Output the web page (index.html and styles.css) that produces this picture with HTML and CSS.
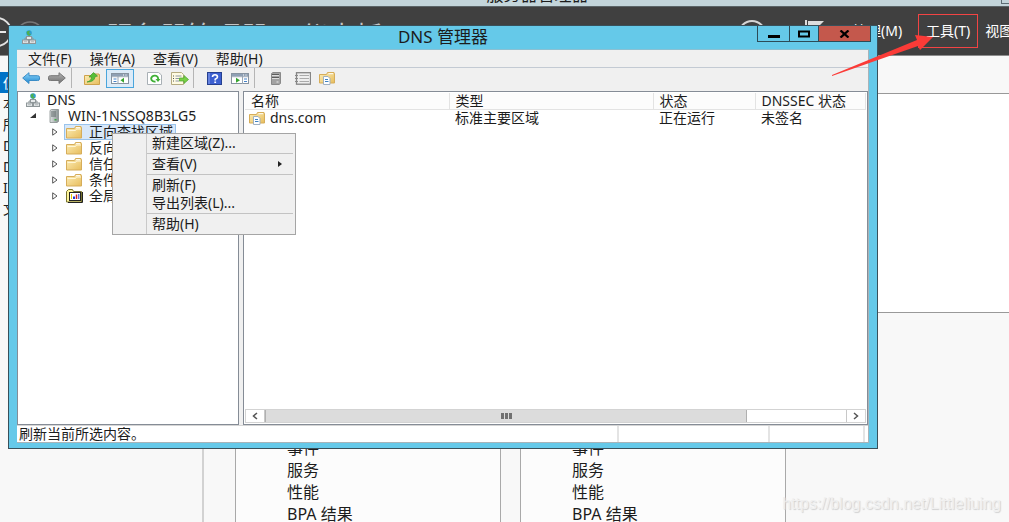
FILE: index.html
```html
<!DOCTYPE html>
<html lang="zh-CN">
<head>
<meta charset="utf-8">
<title>DNS 管理器</title>
<link rel="stylesheet" href="styles.css">
</head>
<body>
<svg class="defs" width="0" height="0" aria-hidden="true">
  <defs>
    <linearGradient id="gold" x1="0" y1="0" x2="1" y2="1"><stop offset="0" stop-color="#fdeeb8"/><stop offset="1" stop-color="#e7bd5c"/></linearGradient>
    <linearGradient id="steel" x1="0" y1="0" x2="1" y2="0"><stop offset="0" stop-color="#dfe3e3"/><stop offset="1" stop-color="#8b9494"/></linearGradient>
    <linearGradient id="sky" x1="0" y1="0" x2="0" y2="1"><stop offset="0" stop-color="#8fd8fb"/><stop offset="1" stop-color="#1f86cf"/></linearGradient>
    <linearGradient id="ash" x1="0" y1="0" x2="0" y2="1"><stop offset="0" stop-color="#b5b5b5"/><stop offset="1" stop-color="#6f6f6f"/></linearGradient>
    <symbol id="i-dns" viewBox="0 0 14 14">
      <path d="M7 5v4M3 10V8h8v2" stroke="#8d9699" fill="none"/>
      <circle cx="7" cy="3" r="2.8" fill="#2f9fd0"/><path d="M4.6 2Q6 .4 8 .8L7 3.200l2 1-1.500 1.600L5.500 5z" fill="#4fb04d"/>
      <rect x="4.500" y="6.500" width="5" height="3" fill="#e6e9ea" stroke="#8f9799"/>
      <rect x=".5" y="10" width="6" height="3.500" fill="#dfe3e4" stroke="#8f9799"/><rect x="7.500" y="10" width="6" height="3.500" fill="#dfe3e4" stroke="#8f9799"/>
      <path d="M2 11.700h3M9 11.700h3" stroke="#b4babc"/>
    </symbol>
    <symbol id="i-server" viewBox="0 0 12 14">
      <path d="M2 1.500L3.500.5h7v12l-1.500 1H2z" fill="url(#steel)" stroke="#858d8d" stroke-width=".8"/>
      <path d="M3 3h5M3 5h5M3 7h5" stroke="#5f6868"/><rect x="6.500" y="10" width="2" height="1.500" fill="#3fae49"/>
    </symbol>
    <symbol id="i-folder" viewBox="0 0 16 13">
      <path d="M.5 2.500h8l1-2h5.500l.5 1v10.500H.5z" fill="url(#gold)" stroke="#d6ad5a"/>
      <path d="M1.500 4.500h8l1-1.500H15" stroke="#fff6d6" fill="none"/><path d="M10 1.700h4" stroke="#fff"/>
    </symbol>
    <symbol id="i-zone" viewBox="0 0 16 13">
      <path d="M.5 2.500h7l1-2h6.500l.5 1v9.500H.5z" fill="url(#gold)" stroke="#d6ad5a"/><path d="M9.500 1.700h4.500" stroke="#fff"/>
      <path d="M4.500 4.500h4.500l2 2v6H4.500z" fill="#fff" stroke="#9fb0c2"/><path d="M6 7.500h3M6 9.500h3.500" stroke="#3d82c4"/>
    </symbol>
    <symbol id="i-log" viewBox="0 0 18 14">
      <path d="M.5 2.500L2.500.5h4l1 2h8v10.500H.5z" fill="#fdf49b" stroke="#77732f"/><path d="M16.500 3v10.500H2" stroke="#222" fill="none"/>
      <rect x="3.500" y="3.500" width="11" height="8" fill="#fff" stroke="#222"/>
      <path d="M5.500 5v5" stroke="#e3c700"/><path d="M8 10V7.500" stroke="#1f3bd1" stroke-width="2"/><path d="M10.500 10V5.500" stroke="#d51d1d" stroke-width="1.500"/><path d="M12.800 10V5" stroke="#1f3bd1"/>
    </symbol>
    <symbol id="i-back" viewBox="0 0 18 12"><path d="M.7 6L7 .7v3h8.500q2 0 2 1.500v2q0 1.300-2 1.300H7v3z" fill="url(#sky)" stroke="#3a8cc6"/></symbol>
    <symbol id="i-next" viewBox="0 0 18 12"><path d="M17.300 6L11 .7v3H2.500q-2 0-2 1.500v2q0 1.300 2 1.300H11v3z" fill="url(#ash)" stroke="#777"/></symbol>
    <symbol id="i-up" viewBox="0 0 16 13">
      <path d="M.5 3.500h7l1-1.500h6.500l.5 1v9.500H.5z" fill="url(#gold)" stroke="#cfa24c"/>
      <path d="M3 10Q7.500 9 7.500 5H5L9.500.6 13.500 4 11 4.800Q10.500 10 3 10z" fill="#57bf38" stroke="#3f9a2b" stroke-width=".7"/>
    </symbol>
    <symbol id="i-pane" viewBox="0 0 18 11">
      <rect x=".5" y=".5" width="17" height="10" fill="#fff" stroke="#8793a0"/><path d="M1 2h16" stroke="#8fa0b4" stroke-width="2"/><path d="M12 2h1M14.500 2h1" stroke="#fff"/>
      <path d="M7 3v8M1 3.700h16" stroke="#9aa7b5"/><path d="M2.500 6h3M2.500 8.500h3" stroke="#4683c9"/><path d="M13 4.800v5L9.500 7.300z" fill="#37a52e"/>
    </symbol>
    <symbol id="i-run" viewBox="0 0 18 11">
      <rect x=".5" y=".5" width="17" height="10" fill="#fff" stroke="#8793a0"/><path d="M1 2h16" stroke="#8fa0b4" stroke-width="2"/><path d="M12 2h1M14.500 2h1" stroke="#fff"/>
      <path d="M11.500 3v8M1 3.700h16" stroke="#9aa7b5"/><path d="M13 6h3M13 8.500h3" stroke="#4683c9"/><path d="M5 4.800v5l4-2.500z" fill="#37a52e"/>
    </symbol>
    <symbol id="i-refresh" viewBox="0 0 15 13">
      <path d="M.5.5h11l3 2.500v9.500H.5z" fill="#fff" stroke="#a9b0b5"/>
      <path d="M11 7.500A3.500 3 0 1 0 8.500 9.500" fill="none" stroke="#3fb035" stroke-width="1.900"/><path d="M8.500 7h5l-2.500 3z" fill="#3fb035"/>
    </symbol>
    <symbol id="i-export" viewBox="0 0 18 13">
      <path d="M.5.5h10l2 2v10H.5z" fill="#fffbe2" stroke="#b5ab80"/><path d="M2 4h1M2 6.500h1M2 9h1" stroke="#555"/><path d="M4.500 4h6M4.500 6.500h4M4.500 9h4" stroke="#8e98a8"/>
      <path d="M8.500 6h4.500V3.500l4.500 4-4.500 4V9H8.500z" fill="#78cf45" stroke="#4aa329" stroke-width=".7"/>
    </symbol>
    <symbol id="i-help" viewBox="0 0 15 13">
      <rect x=".5" y=".5" width="14" height="12" fill="#3c5fd0" stroke="#26408f"/><path d="M2 1v11" stroke="#8da5ee"/>
      <path d="M5.500 5Q5.500 2.700 8 2.700T10.500 5Q10.500 6 8.200 7.200V8.500" fill="none" stroke="#fff" stroke-width="1.600"/><rect x="7.300" y="9.500" width="1.800" height="1.500" fill="#fff"/>
    </symbol>
    <symbol id="i-tower" viewBox="0 0 10 13">
      <path d="M.5 1.500L2 .5h7.500v11l-1.500 1H.5z" fill="#a3a3a3" stroke="#8a8a8a"/><path d="M1 2.500h7M1 5.500h7" stroke="#5d5d5d"/><path d="M1 3.500h7M1 6.500h7" stroke="#ddd"/><path d="M5.500 10h2" stroke="#eee"/>
    </symbol>
    <symbol id="i-list" viewBox="0 0 16 13">
      <rect x="1.500" y=".7" width="14" height="11.500" fill="#eee" stroke="#858585" stroke-width="1.300"/><path d="M4.500 3.500H14M4.500 6.500H14M4.500 9.500H14" stroke="#aaa"/><path d="M0 3.500h3M0 6.500h3M0 9.500h3" stroke="#888"/>
    </symbol>
  </defs>
</svg>

<div class="desktop">
  <div class="host-title">服务器管理器<span class="host-min"></span></div>
  <header class="host-header">
    <svg class="host-nav" width="62" height="48" viewBox="0 0 62 48" aria-hidden="true">
      <circle cx="14" cy="25" r="14" fill="none" stroke="#e2e2e2" stroke-width="2"/><path d="M8 25h15M14 18l-7 7 7 7" stroke="#e8e8e8" stroke-width="2" fill="none"/>
      <circle cx="47" cy="29" r="14" fill="none" stroke="#777" stroke-width="1.500"/>
    </svg>
    <h1 class="host-heading">服务器管理器<span class="dot">·</span>仪表板</h1>
    <svg class="host-tools" width="90" height="36" viewBox="0 0 90 36" aria-hidden="true">
      <circle cx="17" cy="19" r="13" fill="none" stroke="#d5d5d5" stroke-width="2"/><path d="M46 10v18" stroke="#aaa"/>
      <path d="M71 5v26" stroke="#ddd" stroke-width="2"/><path d="M73 6h16l-6 6 4 6H73z" fill="#ddd"/>
    </svg>
    <nav class="host-menu">
      <button type="button">管理(M)</button>
      <button type="button" class="marked">工具(T)</button>
      <button type="button">视图(V)</button>
    </nav>
  </header>
  <div class="host-body">
    <nav class="side">
      <a href="#" class="on">仪表板</a><a href="#">本地服务器</a><a href="#">所有服务器</a><a href="#">DHCP</a><a href="#">DNS</a><a href="#">IIS</a><a href="#">文件和存储服务</a>
    </nav>
    <main class="board">
      <section class="welcome"></section>
      <div class="cards">
        <ul class="card"><li>事件</li><li>服务</li><li>性能</li><li>BPA 结果</li></ul>
        <ul class="card"><li>事件</li><li>服务</li><li>性能</li><li>BPA 结果</li></ul>
      </div>
    </main>
  </div>

  <section class="window" aria-label="DNS 管理器">
    <div class="titlebar">
      <svg class="app-icon" width="14" height="14"><use href="#i-dns"/></svg>
      <h2>DNS 管理器</h2>
      <div class="caption">
        <button type="button" class="min" aria-label="最小化"><svg width="12" height="10"><path d="M0 7.500h12" stroke="#000" stroke-width="3"/></svg></button>
        <button type="button" class="max" aria-label="最大化"><svg width="12" height="8"><rect x="1" y="1.500" width="10" height="5" fill="none" stroke="#000" stroke-width="2"/></svg></button>
        <button type="button" class="close" aria-label="关闭"><svg width="12" height="8"><path d="M1.500.5l8 7M9.500.5l-8 7" stroke="#000" stroke-width="2.300"/></svg></button>
      </div>
    </div>
    <div class="client">
      <nav class="menubar">
        <button type="button">文件(F)</button><button type="button">操作(A)</button><button type="button">查看(V)</button><button type="button">帮助(H)</button>
      </nav>
      <div class="toolbar">
        <div class="group g1">
          <button type="button" aria-label="后退"><svg width="18" height="12"><use href="#i-back"/></svg></button>
          <button type="button" aria-label="前进"><svg width="18" height="12"><use href="#i-next"/></svg></button>
        </div>
        <div class="group g2">
          <button type="button" aria-label="上一级"><svg width="16" height="13"><use href="#i-up"/></svg></button>
          <button type="button" class="pressed" aria-label="显示控制台树"><svg width="18" height="11"><use href="#i-pane"/></svg></button>
          <button type="button" class="spaced" aria-label="刷新"><svg width="15" height="13"><use href="#i-refresh"/></svg></button>
          <button type="button" aria-label="导出列表"><svg width="18" height="13"><use href="#i-export"/></svg></button>
        </div>
        <div class="group g3">
          <button type="button" aria-label="帮助"><svg width="15" height="13"><use href="#i-help"/></svg></button>
          <button type="button" aria-label="显示操作窗格"><svg width="18" height="11"><use href="#i-run"/></svg></button>
        </div>
        <div class="group g4">
          <button type="button" aria-label="服务器"><svg width="10" height="13"><use href="#i-tower"/></svg></button>
          <button type="button" aria-label="列表"><svg width="16" height="13"><use href="#i-list"/></svg></button>
          <button type="button" aria-label="区域"><svg width="16" height="13"><use href="#i-zone"/></svg></button>
        </div>
      </div>
      <div class="panes">
        <ul class="tree">
          <li class="l0"><svg width="14" height="14"><use href="#i-dns"/></svg><span>DNS</span></li>
          <li class="l1"><svg width="8" height="8"><path d="M7 1v5H1z" fill="#333"/></svg><svg width="12" height="14"><use href="#i-server"/></svg><span>WIN-1NSSQ8B3LG5</span></li>
          <li class="l2"><svg width="6" height="8"><path d="M.7.800v6.400L5 4z" fill="#fff" stroke="#555"/></svg><span class="node sel"><svg width="16" height="13"><use href="#i-folder"/></svg>正向查找区域</span></li>
          <li class="l2"><svg width="6" height="8"><path d="M.7.800v6.400L5 4z" fill="#fff" stroke="#555"/></svg><span class="node"><svg width="16" height="13"><use href="#i-folder"/></svg>反向查找区域</span></li>
          <li class="l2"><svg width="6" height="8"><path d="M.7.800v6.400L5 4z" fill="#fff" stroke="#555"/></svg><span class="node"><svg width="16" height="13"><use href="#i-folder"/></svg>信任点</span></li>
          <li class="l2"><svg width="6" height="8"><path d="M.7.800v6.400L5 4z" fill="#fff" stroke="#555"/></svg><span class="node"><svg width="16" height="13"><use href="#i-folder"/></svg>条件转发器</span></li>
          <li class="l2"><svg width="6" height="8"><path d="M.7.800v6.400L5 4z" fill="#fff" stroke="#555"/></svg><span class="node log"><svg width="18" height="14"><use href="#i-log"/></svg>全局日志</span></li>
        </ul>
        <div class="list">
          <table>
            <colgroup><col class="c-name"><col class="c-type"><col class="c-state"><col></colgroup>
            <thead><tr><th>名称</th><th>类型</th><th>状态</th><th>DNSSEC 状态</th></tr></thead>
            <tbody><tr><td><span class="zone"><svg width="16" height="13"><use href="#i-zone"/></svg>dns.com</span></td><td>标准主要区域</td><td>正在运行</td><td>未签名</td></tr></tbody>
          </table>
          <div class="scroll">
            <button type="button" aria-label="向左滚动"><svg width="6" height="8"><path d="M5 1L1.500 4 5 7" fill="none" stroke="#555" stroke-width="1.500"/></svg></button>
            <div class="track"><div class="thumb"><i></i><i></i><i></i></div></div>
            <button type="button" aria-label="向右滚动"><svg width="6" height="8"><path d="M1 1l3.500 3L1 7" fill="none" stroke="#555" stroke-width="1.500"/></svg></button>
          </div>
        </div>
      </div>
      <div class="status"><span class="s-text">刷新当前所选内容。</span><span class="s-mid"></span><span class="s-end"></span></div>
    </div>
    <div class="context" role="menu">
      <button type="button" role="menuitem">新建区域(Z)...</button>
      <hr>
      <button type="button" role="menuitem">查看(V)<svg width="4" height="6"><path d="M0 0v6l4-3z" fill="#222"/></svg></button>
      <hr>
      <button type="button" role="menuitem">刷新(F)</button>
      <button type="button" role="menuitem">导出列表(L)...</button>
      <hr>
      <button type="button" role="menuitem">帮助(H)</button>
    </div>
  </section>

  <svg class="pointer" width="104" height="42" viewBox="0 0 104 42" aria-hidden="true"><path d="M0 40L85 5l-2-5 18 2-13 13-2-4L0 41z" fill="#fb3b37"/></svg>
  <div class="watermark">https://blog.csdn.net/Littleliuing</div>
</div>
</body>
</html>
```
FILE: styles.css
```css
* { box-sizing: border-box; }
body {
  margin: 0;
  font: 14px/16px "Noto Sans", "Noto Sans CJK SC", sans-serif;
  color: #1c1c1c;
}
button {
  margin: 0;
  padding: 0;
  border: 0;
  background: none;
  color: inherit;
  font: inherit;
  white-space: nowrap;
}
ul { margin: 0; padding: 0; list-style: none; }
svg { display: block; flex: none; }
.defs { position: absolute; }

.desktop {
  position: relative;
  display: flex;
  flex-direction: column;
  height: 100vh;
  min-height: 320px;
  overflow: hidden;
  background: #f8f8f8;
}

/* Server manager behind the DNS window */
.host-title {
  display: flex;
  flex: none;
  justify-content: center;
  align-items: flex-end;
  position: relative;
  height: 7px;
  padding-left: 66px;
  overflow: hidden;
  border-bottom: 1px solid #5b6467;
  background: #c3d5da;
  font-size: 17px;
  line-height: 22px;
}
.host-min {
  position: absolute;
  top: 0;
  right: 0;
  width: 8px;
  height: 4px;
  border: solid #5d6d74;
  border-width: 0 0 1px 1px;
}
.host-header {
  display: flex;
  flex: none;
  height: 49px;
  border-bottom: 1px solid #8d8d8d;
  background: #404040;
  color: #fff;
}
.host-nav { margin-left: -17px; }
.host-heading {
  flex: 1;
  margin: 0;
  padding: 11px 0 0 61px;
  color: #c4c4c4;
  font-size: 27px;
  font-weight: 400;
  line-height: 36px;
  white-space: nowrap;
}
.dot { padding: 0 13px; }
.host-tools { margin: 8px 28px 0 0; }
.host-menu {
  display: flex;
  align-items: flex-start;
  margin-right: -21px;
  padding-top: 7px;
}
.host-menu button { height: 34px; }
.host-menu .marked {
  width: 60px;
  margin: 0 7px 0 16px;
  border: 1px solid #f24444;
}
.host-body { display: flex; flex: 1; min-height: 0; }
.side {
  width: 204px;
  padding-top: 16px;
  border-right: 2px solid #d2d2d2;
}
.side a {
  display: block;
  padding-left: 3px;
  color: #222;
  line-height: 21px;
  text-decoration: none;
}
.side .on { background: #0072c6; color: #fff; }
.board { flex: 1; min-width: 0; padding: 37px 0 0 31px; }
.welcome {
  height: 220px;
  border: 1px solid #999;
  border-right: 0;
  background: #fff;
}
.cards { display: flex; gap: 19px; height: 100%; }
.card {
  width: 266px;
  padding: 124px 0 0 51px;
  border: 1px solid #a9a9a9;
  border-top: 0;
  background: #fcfcfc;
  font-size: 16px;
  line-height: 22px;
}

/* DNS window */
.window {
  position: absolute;
  inset: 25px 131px 73px 8px;
  display: flex;
  flex-direction: column;
  padding: 0 8px 5px;
  border: 1px solid #39505a;
  background: #65c9e9;
}
.titlebar {
  display: grid;
  grid-template-columns: 1fr auto 1fr;
  height: 23px;
}
.app-icon { margin: 4px 0 0 5px; }
.titlebar h2 {
  margin: 0;
  font-size: 17px;
  font-weight: 400;
  line-height: 22px;
}
.caption {
  display: flex;
  justify-self: end;
  height: 16px;
  margin-right: -2px;
  border: 1px solid #2c4b57;
  border-top: 0;
}
.caption button { display: grid; place-items: center; }
.caption .min { width: 31px; }
.caption .max { width: 30px; border: solid #2c4b57; border-width: 0 1px; }
.caption .close { width: 51px; background: #c4584c; }
.client {
  display: flex;
  flex: 1;
  flex-direction: column;
  min-height: 0;
  border: 1px solid #a9b3b8;
  border-width: 1px 1px 1px 0;
  border-top-color: #8cc0d2;
  background: #f0f0f0;
}
.menubar {
  display: flex;
  gap: 18px;
  height: 18px;
  padding-left: 11px;
  border-bottom: 1px solid #c3cad3;
}
.toolbar {
  display: flex;
  height: 23px;
  padding-left: 5px;
}
.group { display: flex; align-items: center; height: 20px; }
.group + .group { border-left: 1px solid #b5b5b5; }
.g1 { gap: 8px; width: 49px; }
.g2 { gap: 6px; width: 122px; padding-left: 12px; }
.g3 { gap: 9px; width: 61px; padding-left: 13px; }
.g4 { gap: 14px; padding-left: 16px; }
.g4 button:nth-child(2) { margin-right: -6px; }
.pressed {
  height: 19px;
  padding: 0 4px;
  border: 1px solid #4ba6dc;
  background: #dcebf8;
}
.spaced { margin: 0 3px 0 7px; }
.panes { display: flex; flex: 1; gap: 4px; min-height: 0; }
.tree, .list { border: 1px solid #858c96; background: #fff; }
.tree { width: 222px; }
.tree li {
  display: flex;
  align-items: center;
  height: 16px;
  white-space: nowrap;
}
.tree .l0 { gap: 7px; padding-left: 8px; }
.tree .l1 { gap: 11px; padding-left: 11px; }
.tree .l1 span { margin-left: -3px; }
.tree .l2 { gap: 6px; padding-left: 34px; }
.node {
  display: flex;
  align-items: center;
  gap: 7px;
  height: 16px;
  padding: 0 2px 0 1px;
  border: 1px solid transparent;
}
.log { gap: 5px; }
.sel { border-color: #9ac4ec; background: #d8e8f9; }
.list { display: flex; flex: 1; flex-direction: column; min-width: 0; padding: 1px; }
table { width: 100%; border-collapse: collapse; table-layout: fixed; }
.c-name, .c-type { width: 204px; }
.c-state { width: 102px; }
th, td {
  height: 16px;
  padding: 0 0 0 6px;
  font-weight: 400;
  line-height: 16px;
  text-align: left;
  white-space: nowrap;
}
th { border: solid #e3e3e3; border-width: 0 1px 1px 0; background: #fcfcfc; }
td:first-child { padding-left: 4px; }
.zone { display: flex; align-items: center; gap: 5px; }
.scroll {
  display: flex;
  height: 14px;
  margin-top: auto;
  border: 1px solid #d3d3d3;
}
.scroll button { display: grid; place-items: center; width: 18px; background: #fff; }
.track { flex: 1; border: solid #c8c8c8; border-width: 0 1px; }
.thumb {
  display: flex;
  align-items: center;
  justify-content: center;
  gap: 1px;
  width: 83%;
  height: 100%;
  border: solid #b0b0b0;
  border-width: 0 1px;
  background: #dcdcdc;
}
.thumb i { width: 3px; height: 6px; background: #707070; }
.status {
  display: flex;
  height: 17px;
  padding-right: 3px;
  border-top: 1px solid #d5d5d5;
  background: #fff;
}
.status span { border-right: 2px solid #e4e4e4; }
.s-text { flex: 1; padding-left: 2px; }
.s-mid { width: 151px; }
.s-end { width: 95px; }

.context {
  position: absolute;
  top: 107px;
  left: 103px;
  width: 184px;
  padding: 0 2px 2px 34px;
  border: 1px solid #a5a5a5;
  background: linear-gradient(90deg, #f0f0f0 33px, #c9c9c9 33px, #c9c9c9 34px, #f0f0f0 34px);
}
.context button {
  display: flex;
  align-items: center;
  justify-content: space-between;
  width: 100%;
  height: 18px;
  padding: 0 11px 0 5px;
}
.context hr { height: 1px; margin: 1px 0; border: 0; background: #c3c3c3; }
.context hr + button:last-child { height: 17px; }

.pointer { position: absolute; top: 35px; right: 73px; }
.watermark {
  position: absolute;
  right: 8px;
  bottom: 8px;
  color: #f0f0f0;
  font: 16px/20px "Liberation Sans", sans-serif;
  text-shadow: 1px 1px 1px #d0d0d0;
}
```
